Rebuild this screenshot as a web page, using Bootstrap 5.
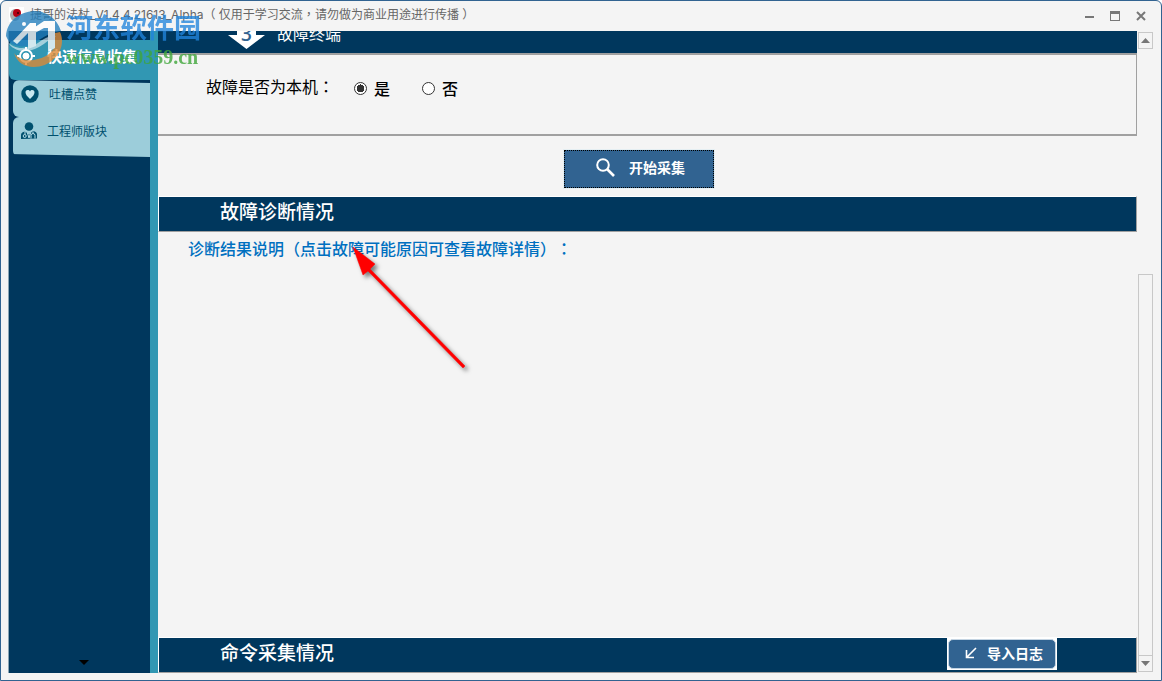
<!DOCTYPE html>
<html lang="zh-CN">
<head>
<meta charset="utf-8">
<meta name="viewport" content="width=device-width, initial-scale=1">
<title>捷哥的法杖</title>
<link href="https://cdn.jsdelivr.net/npm/bootstrap@5.3.0/dist/css/bootstrap.min.css" rel="stylesheet">
<style>
:root{--navy:#00375d;--teal:#3197b3;--pale:#9ccdda;--paper:#f4f4f4;--steel:#316391;--line:#a0a0a0}
body{font-family:"Noto Sans CJK SC",sans-serif;font-size:16px;line-height:24px;color:#000;background:#fff;text-spacing-trim:space-all}
svg{display:block;flex:none}
.punct{font-family:"Noto Sans CJK TC",sans-serif;font-kerning:none}
.app-window{background:var(--paper);border:1px solid var(--steel);border-radius:6px 6px 0 0}
.title-bar{height:30px;font-family:Inter,"Noto Sans CJK SC",sans-serif;font-size:12px;color:#666;padding:0 7px 4px 8px;gap:6px}
.win-btn{width:26px;height:22px;color:#777}
.win-btn,.scroll-btn{border:0;background:none;padding:0;display:flex;align-items:center;justify-content:center}
.app-body{padding:0 8px 7px 7px}
.side{width:150px;background:var(--navy);border-right:8px solid var(--teal);border-left:1px solid #8ba5b5}
.side-head{background:var(--teal);height:40px;margin:9px -1px 0 0;padding:0 0 8px 8px;border-radius:6px 0 0 6px;color:#fff;font-size:15px;font-weight:700;gap:12px}
.side-item{height:37px;margin-left:4px;padding:0 0 10px 8px;background:var(--pale);border-radius:6px 0 0 6px;color:#00506e;font-size:12px;text-decoration:none;gap:10px}
.side-item:last-child{height:40px;padding-bottom:12px}
.side-list{clip-path:polygon(0 0,100% 3px,100% 100%,0 calc(100% - 3px))}
.side-more{padding:0 0 8px 8px}
.band{background:var(--navy);color:#fff;height:36px;border:1px solid var(--line);border-top-color:#fff;border-left-color:#fff;padding:0 79px 2px 61px}
.band h2{font-size:19px;line-height:24px;font-weight:500;margin:0 0 4px}
.cut-band{height:22px;background:var(--navy);color:#fff;overflow:hidden;padding-left:70px;gap:12px}
.cut-band h2{font-size:16px;line-height:24px;font-weight:400;margin:0 0 8px}
.question{border:2px solid var(--line);border-left:0;border-right-width:1px;padding:19px 0 0 48px;height:83px}
.question .form-check-input{width:13px;height:13px;margin:0 7px 0 0;border:1px solid #333;box-shadow:none;background-color:#fff}
.question .form-check-input:checked{background-image:radial-gradient(circle,#333 0 4px,transparent 4px)}
.question label{font-weight:500}
.option{height:24px;margin-top:2px}
.go-row{padding:14px 18px 8px 0}
.go-btn{width:150px;height:38px;background:var(--steel);color:#fff;border:1px dotted #000;border-radius:0;outline:1px solid #e4eef2;font-size:14px;font-weight:700;gap:14px;padding:0 0 4px 4px}
.go-btn:hover,.log-btn:hover{background:#3b70a1;color:#fff}
.log-btn{width:108px;height:30px;background:var(--steel);color:#fff;border:1px solid #c4d4e2;border-radius:5px;font-size:14px;font-weight:700;gap:10px;padding:0 0 2px 4px}
.log-frame{background:#fff;padding:1px}
.result-title{color:#0070c0;font-size:16px;line-height:24px;font-weight:500;margin:4px 0 0 30px}
.gutter{width:15px;margin:0 0 1px 1px}
.scroll-btn{width:15px;height:17px;border:1px solid #c8c8c8;margin-top:1px}
.track{border:1px solid #c8c8c8;border-bottom:0;flex:381 1 0}
.track-gap{flex:225 1 0}
.pointer{position:absolute;left:350px;top:242px;filter:drop-shadow(3px 3px 2px rgba(0,0,0,.5))}
.watermark{position:absolute;left:4px;top:8px;pointer-events:none}
.mark-text{padding-left:3px}
.mark-name{font-size:27px;line-height:36px;font-weight:700;color:#2185dc;opacity:.78}
.mark-url{font-family:"Liberation Serif",serif;font-size:20px;line-height:24px;font-weight:700;color:#3fa63a;opacity:.8}
</style>
</head>
<body>
<div class="app-window position-relative min-vh-100 d-flex flex-column">
  <header class="title-bar d-flex align-items-center">
    <svg width="15" height="15" viewBox="0 0 15 15"><rect width="15" height="15" fill="#fff"/><ellipse cx="6" cy="8" rx="5" ry="6" fill="#aaa"/><circle cx="8" cy="6" r="4" fill="#b60012"/><circle cx="9" cy="6" r="1" fill="#320008"/></svg>
    <span class="me-auto text-truncate">捷哥的法杖_V1.4.4.21613_Alpha（ 仅用于学习交流<span class="punct" lang="zh-TW">，</span>请勿做为商业用途进行传播 ）</span>
    <div class="d-flex pt-1">
      <button class="win-btn" aria-label="最小化"><svg width="9" height="11"><path d="M0 5h9v2H0z" fill="currentColor"/></svg></button>
      <button class="win-btn" aria-label="最大化"><svg width="10" height="10"><path d="M0 0h10v10H0zM1 3v6h8V3z" fill="currentColor" fill-rule="evenodd"/></svg></button>
      <button class="win-btn" aria-label="关闭"><svg width="10" height="10"><path d="M1 1l8 8M9 1L1 9" stroke="currentColor" stroke-width="2"/></svg></button>
    </div>
  </header>

  <div class="app-body d-flex flex-grow-1">
    <nav class="side d-flex flex-column flex-shrink-0">
      <div class="side-head d-flex align-items-center">
        <svg width="18" height="18" viewBox="0 0 18 18" fill="none" stroke="#fff"><circle cx="9" cy="9" r="6" stroke-width="2"/><circle cx="9" cy="9" r="3" fill="#fff"/><path d="M0 9h4M14 9h4M9 0v3M9 15v3" stroke-width="2"/></svg>
        <span class="text-nowrap">快速信息收集</span>
      </div>
      <div class="side-list">
        <a href="#" class="side-item d-flex align-items-center">
          <svg width="18" height="18" viewBox="0 0 18 18"><circle cx="9" cy="9" r="8.7" fill="#00506e"/><path d="M9 14C6 11 4.5 9.500 4.500 7.200C4.500 4.500 8 4.200 9 6.400C10 4.200 13.500 4.500 13.500 7.200C13.500 9.500 12 11 9 14z" fill="#c8e8f0"/></svg>
          <span>吐槽点赞</span>
        </a>
        <a href="#" class="side-item d-flex align-items-center">
          <svg width="16" height="18" viewBox="0 0 16 18" fill="#00506e"><circle cx="8" cy="4.500" r="4.300"/><path d="M0 17v-4q0-3 4-3.500l4 3 4-3.500q4 .5 4 3.500v4z"/><path d="M4 9.500v3M12 9.500v2m-2 5v-3q0-2 2-2t2 2v3M6.500 11L8 16l1.500-5" stroke="#b8dfe9" fill="none"/><circle cx="3.700" cy="14" r="1.500" fill="none" stroke="#b8dfe9"/></svg>
          <span>工程师版块</span>
        </a>
      </div>
      <div class="side-more mt-auto d-flex justify-content-center"><svg width="10" height="5"><path d="M0 0h10L5 5z"/></svg></div>
    </nav>

    <main class="flex-grow-1 d-flex flex-column">
      <section>
        <div class="cut-band d-flex align-items-end">
          <svg class="mb-1" width="37" height="40" viewBox="0 0 37 40"><path d="M9 0h19v26h9L18.500 40 0 26h9z" fill="#fff"/><text x="18.500" y="32" text-anchor="middle" font-family="Open Sans" font-size="19" font-weight="600" fill="#316391">3</text></svg>
          <h2>故障终端</h2>
        </div>
        <div class="question d-flex align-items-start">
          <span>故障是否为本机<span class="punct" lang="zh-TW">：</span></span>
          <div class="option d-flex align-items-center ms-3 ps-1"><input class="form-check-input" type="radio" name="local" id="yes" checked><label for="yes">是</label></div>
          <div class="option d-flex align-items-center ms-4 ps-2"><input class="form-check-input" type="radio" name="local" id="no"><label for="no">否</label></div>
        </div>
      </section>
      <div class="go-row d-flex justify-content-center">
        <button class="btn go-btn d-flex align-items-center justify-content-center">
          <svg width="19" height="19" viewBox="0 0 19 19" fill="none" stroke="#fff"><circle cx="7" cy="7" r="5.800" stroke-width="2"/><path d="M11 11l7 7" stroke-width="2.600"/></svg>
          <span>开始采集</span>
        </button>
      </div>
      <div class="band d-flex align-items-center"><h2>故障诊断情况</h2></div>
      <h3 class="result-title">诊断结果说明<span class="punct" lang="zh-TW">（</span>点击故障可能原因可查看故障详情<span class="punct" lang="zh-TW">）：</span></h3>
      <div class="flex-grow-1"></div>
      <div class="band d-flex align-items-center">
        <h2 class="me-auto">命令采集情况</h2>
        <div class="log-frame">
          <button class="btn log-btn d-flex align-items-center justify-content-center"><svg width="12" height="12" fill="none" stroke="#fff" stroke-width="1.600"><path d="M11 1L2 10M1.500 3v7.500H9"/></svg><span>导入日志</span></button>
        </div>
      </div>
    </main>

    <div class="gutter d-flex flex-column flex-shrink-0">
      <button class="scroll-btn" aria-label="向上滚动"><svg width="9" height="5"><path d="M0 5h9L4.500 0z" fill="#777"/></svg></button>
      <div class="track-gap"></div>
      <div class="track"></div>
      <button class="scroll-btn mt-0" aria-label="向下滚动"><svg width="9" height="5"><path d="M0 0h9L4.500 5z" fill="#777"/></svg></button>
    </div>
  </div>

  <svg class="pointer" width="118" height="128" viewBox="0 0 118 128"><path d="M2 4l22 17-5 5 95 97-2 2-95-97-5 4z" fill="#f00" stroke="#f00" stroke-width=".5"/></svg>

  <div class="watermark d-flex">
    <svg width="58" height="58" viewBox="0 0 58 58" opacity=".78"><path d="M1 27C2 12 14 3 29 2c12 0 23 7 27 20-8 1-15 4-22 9-8 6-16 8-24 5-4-1-7-4-9-9z" fill="#237fbd"/><path d="M29 58C44 58 57 46 57 32c0-4-1-7-2-9l-5 1v12c-2 8-10 13-21 15-8 1-16-1-20-7 3 9 10 14 20 14z" fill="#e08a35"/><path d="M8 32L25 14h6v23l-8 3V24L12 35zM30 18l9-6h11v27l-7 4V19h-4l-9 5z" fill="#fff"/><path d="M2 32c6 8 17 9 27 4 8-4 12-10 22-9-5 2-10 7-17 11C22 45 8 43 2 32z" fill="#fff" opacity=".7"/><circle cx="19" cy="15" r="2" fill="#fff"/></svg>
    <div class="mark-text text-nowrap">
      <div class="mark-name">河东软件园</div>
      <div class="mark-url">www.pc0359.cn</div>
    </div>
  </div>
</div>
<script src="https://cdn.jsdelivr.net/npm/bootstrap@5.3.0/dist/js/bootstrap.bundle.min.js"></script>
</body>
</html>
